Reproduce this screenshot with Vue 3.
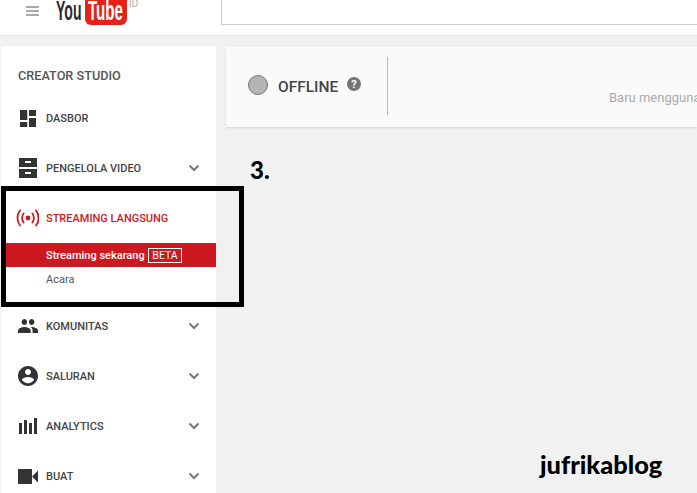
<template>
  <div class="page">
    <header class="topbar">
      <div class="burger"><span></span><span></span><span></span></div>
      <div class="logo">
        <span class="logo__you">You</span>
        <span class="logo__tube"><span>Tube</span></span>
        <span class="logo__id">ID</span>
      </div>
      <div class="search"></div>
    </header>

    <div class="content">
      <aside class="sidebar">
        <h2 class="sidebar__title">CREATOR STUDIO</h2>
        <template v-for="item in items" :key="item.label">
          <div class="nav" :class="{ nav_active: item.active }">
            <svg class="nav__icon" viewBox="0 0 24 24" width="24" height="24" v-html="item.icon"></svg>
            <span class="nav__label">{{ item.label }}</span>
            <svg v-if="item.chevron" class="nav__chevron" viewBox="0 0 12 8" width="12" height="8">
              <path d="M1.5 1.5 6 6l4.5-4.5" fill="none" stroke="#777" stroke-width="2" />
            </svg>
          </div>
          <div v-if="item.active" class="subnav">
            <div class="subnav__item subnav__item_active">
              Streaming sekarang <span class="beta">BETA</span>
            </div>
            <div class="subnav__item">Acara</div>
          </div>
        </template>
      </aside>

      <main class="main">
        <section class="status">
          <div class="status__left">
            <span class="status__dot"></span>
            <span class="status__text">OFFLINE</span>
            <svg class="status__help" viewBox="0 0 14 14" width="14" height="14">
              <circle cx="7" cy="7" r="7" fill="#757575" />
              <text x="7" y="10.8" text-anchor="middle" class="status__q">?</text>
            </svg>
          </div>
          <div class="status__note">Baru menggunakan Streaming Langsung?</div>
        </section>
      </main>
    </div>

    <div class="mark-box"></div>
    <div class="mark-number">3.</div>
    <div class="mark-credit">jufrikablog</div>
  </div>
</template>

<script setup>
const items = [
  { label: 'DASBOR', icon: '<path fill="#333" d="M5 4h7.3v10H5zM5 16h7.3v5H5zM14 4h7v6h-7zM14 12h7v9h-7z"/>' },
  {
    label: 'PENGELOLA VIDEO',
    chevron: true,
    icon: '<path fill="#333" fill-rule="evenodd" d="M4 2h18v9H4zM4 13h18v9H4zM10 5v2h6V5zM10 16v2h6v-2z"/>'
  },
  {
    label: 'STREAMING LANGSUNG',
    active: true,
    icon: '<g fill="none" stroke="#cc181e" stroke-width="1.8" stroke-linecap="round"><path d="M5 4.5c-3.4 4-3.4 11 0 15M21 4.5c3.4 4 3.4 11 0 15M8.6 7.5c-2 2.4-2 6.6 0 9M17.4 7.5c2 2.4 2 6.6 0 9"/></g><circle cx="13" cy="12" r="2.4" fill="#cc181e"/>'
  },
  {
    label: 'KOMUNITAS',
    chevron: true,
    icon: '<path fill="#333" transform="translate(2.1 0) scale(.91 1)" d="M16 11c1.66 0 2.99-1.34 2.99-3S17.66 5 16 5c-1.66 0-3 1.34-3 3s1.34 3 3 3zm-8 0c1.66 0 2.99-1.34 2.99-3S9.66 5 8 5C6.34 5 5 6.34 5 8s1.34 3 3 3zm0 2c-2.33 0-7 1.17-7 3.5V19h14v-2.5c0-2.33-4.67-3.5-7-3.5zm8 0c-.29 0-.62.02-.97.05 1.16.84 1.97 1.97 1.97 3.45V19h6v-2.5c0-2.33-4.67-3.5-7-3.5z"/>'
  },
  {
    label: 'SALURAN',
    chevron: true,
    icon: '<path fill="#333" transform="translate(1 0)" d="M12 2C6.48 2 2 6.48 2 12s4.48 10 10 10 10-4.48 10-10S17.52 2 12 2zm0 3c1.66 0 3 1.34 3 3s-1.34 3-3 3-3-1.34-3-3 1.34-3 3-3zm0 14.2c-2.5 0-4.71-1.28-6-3.22.03-1.99 4-3.08 6-3.08 1.99 0 5.97 1.09 6 3.08-1.29 1.94-3.5 3.22-6 3.22z"/>'
  },
  {
    label: 'ANALYTICS',
    chevron: true,
    icon: '<path fill="#333" d="M4 9h3v11H4zM9 6h3v14H9zM14 9h3v11h-3zM19 4h3v16h-3z"/>'
  },
  {
    label: 'BUAT',
    chevron: true,
    icon: '<path fill="#333" d="M3 5h14v15H3zM17 12.5l6-6v12z"/>'
  }
]
</script>

<style scoped>
.page {
  position: relative;
  height: 493px;
  overflow: hidden;
  background: #f1f1f1;
  font-family: Roboto, "Liberation Sans", sans-serif;
}

.topbar {
  display: flex;
  height: 35px;
  background: #fff;
  border-bottom: 1px solid #e8e8e8;
}

.burger {
  display: flex;
  flex-direction: column;
  gap: 2px;
  width: 13px;
  margin: 6px 0 0 26px;
}

.burger span {
  height: 2px;
  background: #aaa;
}

.logo {
  display: flex;
  align-items: flex-start;
  width: 165px;
  margin-left: 17px;
}

.logo__you {
  flex: none;
  width: 29px;
  margin-top: -4px;
  font-family: "Liberation Sans", sans-serif;
  font-size: 27px;
  line-height: 30px;
  font-weight: 700;
  color: #2b2b2b;
  transform: scaleX(0.52);
  transform-origin: left;
}

.logo__tube {
  flex: none;
  display: block;
  width: 42px;
  height: 25px;
  border-radius: 0 0 6px 6px;
  background: #e62117;
}

.logo__tube span {
  display: block;
  width: 64px;
  margin: -4px 0 0 3px;
  font-family: "Liberation Sans", sans-serif;
  font-size: 27px;
  line-height: 30px;
  font-weight: 700;
  color: #fff;
  transform: scaleX(0.56);
  transform-origin: left;
}

.logo__id {
  flex: none;
  margin: -2px 0 0 2px;
  font-size: 10px;
  line-height: 12px;
  color: #aaa;
}

.search {
  flex: 1;
  height: 24px;
  border-left: 1px solid #ccc;
  border-bottom: 1px solid #ccc;
}

.content {
  display: flex;
  align-items: flex-start;
}

.sidebar {
  flex: none;
  width: 215px;
  height: 470px;
  margin: 10px 0 0 1px;
  background: #fff;
}

.sidebar__title {
  height: 47px;
  margin: 0;
  padding: 23px 0 0 17px;
  box-sizing: border-box;
  font-size: 12.7px;
  line-height: 14px;
  font-weight: 500;
  color: #555;
}

.nav {
  display: flex;
  align-items: center;
  height: 50px;
  padding-left: 14px;
  color: #444;
}

.nav_active {
  color: #cc181e;
}

.nav__icon {
  flex: none;
}

.nav__label {
  flex: 1;
  margin-left: 7px;
  font-size: 11px;
  font-weight: 500;
}

.nav__chevron {
  flex: none;
  margin-right: 16px;
}

.subnav {
  padding-bottom: 10px;
}

.subnav__item {
  height: 24px;
  padding-left: 45px;
  font-size: 11px;
  line-height: 25px;
  color: #555;
}

.subnav__item_active {
  background: #cc181e;
  color: #fff;
  font-weight: 500;
}

.beta {
  display: inline-block;
  margin-left: 1px;
  padding: 0 3px;
  border: 1px solid #fff;
  font-size: 10.5px;
  line-height: 13px;
  font-weight: 400;
}

.main {
  flex: 1;
  min-width: 0;
  margin: 11px 0 0 10px;
}

.status {
  display: flex;
  height: 80px;
  background: #fafafa;
  box-shadow: 0 1px 2px rgba(0, 0, 0, 0.1);
}

.status__left {
  display: flex;
  align-items: center;
  flex: none;
  width: 162px;
  height: 58px;
  margin-top: 10px;
  padding-left: 22px;
  box-sizing: border-box;
  border-right: 1px solid #bbb;
}

.status__dot {
  flex: none;
  width: 18px;
  height: 18px;
  margin-top: -2px;
  border: 1px solid #777;
  border-radius: 50%;
  background: #b4b4b4;
}

.status__text {
  margin: 2px 0 0 10px;
  font-size: 15.5px;
  font-weight: 500;
  color: #444;
}

.status__help {
  flex: none;
  margin: -4px 0 0 9px;
}

.status__q {
  font-size: 11px;
  font-weight: 700;
  fill: #fff;
}

.status__note {
  flex: none;
  margin: 44px 0 0 221px;
  font-size: 13px;
  line-height: 14px;
  color: #aaa;
  white-space: nowrap;
}

/* annotations painted over the screenshot */
.mark-box {
  position: absolute;
  left: 1px;
  top: 186px;
  width: 243px;
  height: 121px;
  box-sizing: border-box;
  border: 5px solid #000;
}

.mark-number,
.mark-credit {
  position: absolute;
  font-family: Lato, "Open Sans", sans-serif;
  font-weight: 900;
  color: #000;
}

.mark-number {
  left: 250px;
  top: 155px;
  font-size: 24px;
  line-height: 30px;
}

.mark-credit {
  left: 540px;
  top: 449px;
  font-size: 25.4px;
  line-height: 30px;
}
</style>
